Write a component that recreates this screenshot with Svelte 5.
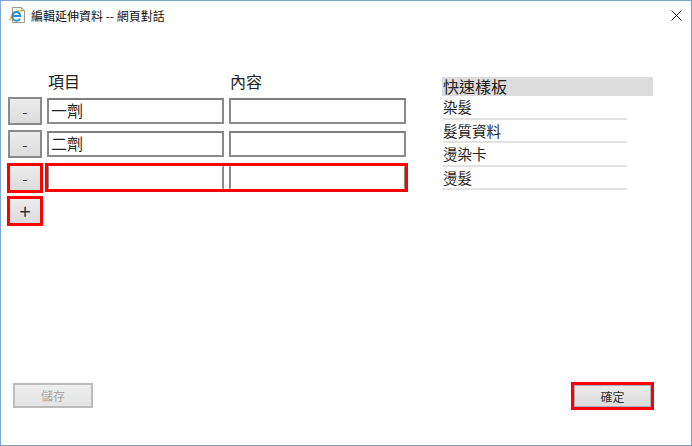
<script lang="ts">
	let rows = [
		{ id: 1, item: '一劑', content: '', marked: false },
		{ id: 2, item: '二劑', content: '', marked: false },
		{ id: 3, item: '', content: '', marked: true }
	];
	const templates = ['染髮', '髮質資料', '燙染卡', '燙髮'];
</script>

<div class="window">
	<header class="titlebar">
		<svg class="app-icon" width="17" height="17" viewBox="0 0 17 17" aria-hidden="true">
			<path d="M3.5 .5h9l3 3v12h-12z" fill="#fbfbfb" stroke="#9a9a9a" />
			<path d="M12.5 .5v3h3" fill="#e4e4e4" stroke="#9a9a9a" />
			<path d="M.8 13.5C2.5 7.5 7.5 3.2 12.5 3.6" fill="none" stroke="#f0bf2e" stroke-width="1.7" />
			<path d="M3.6 9h7.6C11 6.2 9 4.8 7 5 4.8 5.300 3.300 7.300 3.300 9.500c0 2.600 1.900 4.300 4.200 4.300 1.700 0 3-.8 3.600-2.100" fill="none" stroke="#2a8fdc" stroke-width="2" />
		</svg>
		<span class="title">編輯延伸資料 -- 網頁對話</span>
		<svg class="close" width="11" height="11" viewBox="0 0 11 11" aria-hidden="true">
			<path d="M.5 .5l10 10M10.500 .5l-10 10" stroke="#222" stroke-width="1" fill="none" />
		</svg>
	</header>

	<main class="body">
		<section class="editor">
			<div class="heads">
				<span>項目</span>
				<span>內容</span>
			</div>
			{#each rows as row (row.id)}
				<div class="row">
					<button class="btn small" class:marked={row.marked}>-</button>
					<div class="fields" class:marked={row.marked}>
						<input class="input" value={row.item} />
						<input class="input" value={row.content} />
					</div>
				</div>
			{/each}
			<button class="btn small add marked">+</button>
		</section>

		<aside class="templates">
			<div class="templates-head">快速樣板</div>
			<ul>
				{#each templates as name}
					<li>{name}</li>
				{/each}
			</ul>
		</aside>
	</main>

	<footer class="actions">
		<button class="btn save" disabled>儲存</button>
		<button class="btn ok">確定</button>
	</footer>
</div>

<style>
	:global(body) {
		margin: 0;
		background: #fff;
	}

	.window {
		box-sizing: border-box;
		width: 692px;
		height: 446px;
		display: flex;
		flex-direction: column;
		border: 1px solid #7ba6cf;
		border-bottom-color: #7f9db9;
		border-right-color: #7f9db9;
		font-family: "Noto Sans CJK TC", "Liberation Sans", sans-serif;
		color: #222;
		overflow: hidden;
	}

	.titlebar {
		display: flex;
		align-items: center;
		height: 29px;
		padding: 0 9px 0 8px;
		flex: none;
	}

	.app-icon {
		flex: none;
	}

	.title {
		margin-left: 5px;
		font-size: 12px;
		color: #111;
		flex: 1;
		white-space: pre;
	}

	.close {
		flex: none;
	}

	.body {
		flex: 1;
		display: flex;
		padding: 43px 0 0 7px;
		min-height: 0;
	}

	.editor {
		width: 434px;
		flex: none;
		display: flex;
		flex-direction: column;
		align-items: flex-start;
	}

	.heads {
		display: flex;
		height: 24px;
		padding-left: 40px;
		font-size: 16px;
		line-height: 17px;
		color: #222;
	}

	.heads span {
		width: 182px;
	}

	.row {
		display: flex;
		align-items: center;
		gap: 5px;
		height: 28px;
		margin-bottom: 5.25px;
	}

	.btn {
		box-sizing: border-box;
		font-family: inherit;
		color: #333;
		background: linear-gradient(#ececec, #dcdcdc);
		border: 2px solid #8a8a8a;
		padding: 0;
		cursor: default;
	}

	.small {
		width: 34px;
		height: 28px;
		font-size: 14px;
		line-height: 1;
	}

	.add {
		font-size: 20px;
	}

	.btn.marked {
		outline: 3px solid #f00;
		outline-offset: -2px;
	}

	.fields {
		display: flex;
		gap: 5px;
	}

	.fields.marked {
		outline: 3px solid #f00;
		outline-offset: -1px;
	}

	.input {
		box-sizing: border-box;
		width: 177px;
		height: 26px;
		padding: 0 2px 2px;
		border: 2px solid #8a8a8a;
		border-top-color: #7d7d7d;
		background: #fff;
		font-family: inherit;
		font-size: 16px;
		color: #222;
		outline: none;
	}

	.fields.marked .input {
		height: 25px;
		border-top-color: #fff;
		border-bottom-color: #fff;
	}

	.templates {
		width: 211px;
		flex: none;
		margin-top: 4px;
	}

	.templates-head {
		height: 19px;
		padding-left: 1px;
		background: #dcdcdc;
		font-size: 16px;
		line-height: 19px;
		color: #222;
	}

	ul {
		list-style: none;
		margin: 0;
		padding: 0;
	}

	li {
		box-sizing: border-box;
		width: 184px;
		height: 23.5px;
		margin-left: 1px;
		border-bottom: 2px solid #e2e2e2;
		font-size: 14.5px;
		line-height: 22px;
		color: #222;
	}

	.actions {
		display: flex;
		justify-content: space-between;
		align-items: flex-start;
		flex: none;
		height: 63px;
		padding: 1px 40px 0 12px;
		box-sizing: border-box;
	}

	.save {
		width: 80px;
		height: 25px;
		font-size: 12px;
		color: #a6a6a6;
		background: linear-gradient(#eeeeee, #e4e4e4);
		border-color: #bcbcbc;
	}

	.ok {
		width: 77px;
		height: 22px;
		margin-top: 2px;
		font-size: 12px;
		border: 1px solid #b0b0b0;
		outline: 3px solid #f00;
	}
</style>
